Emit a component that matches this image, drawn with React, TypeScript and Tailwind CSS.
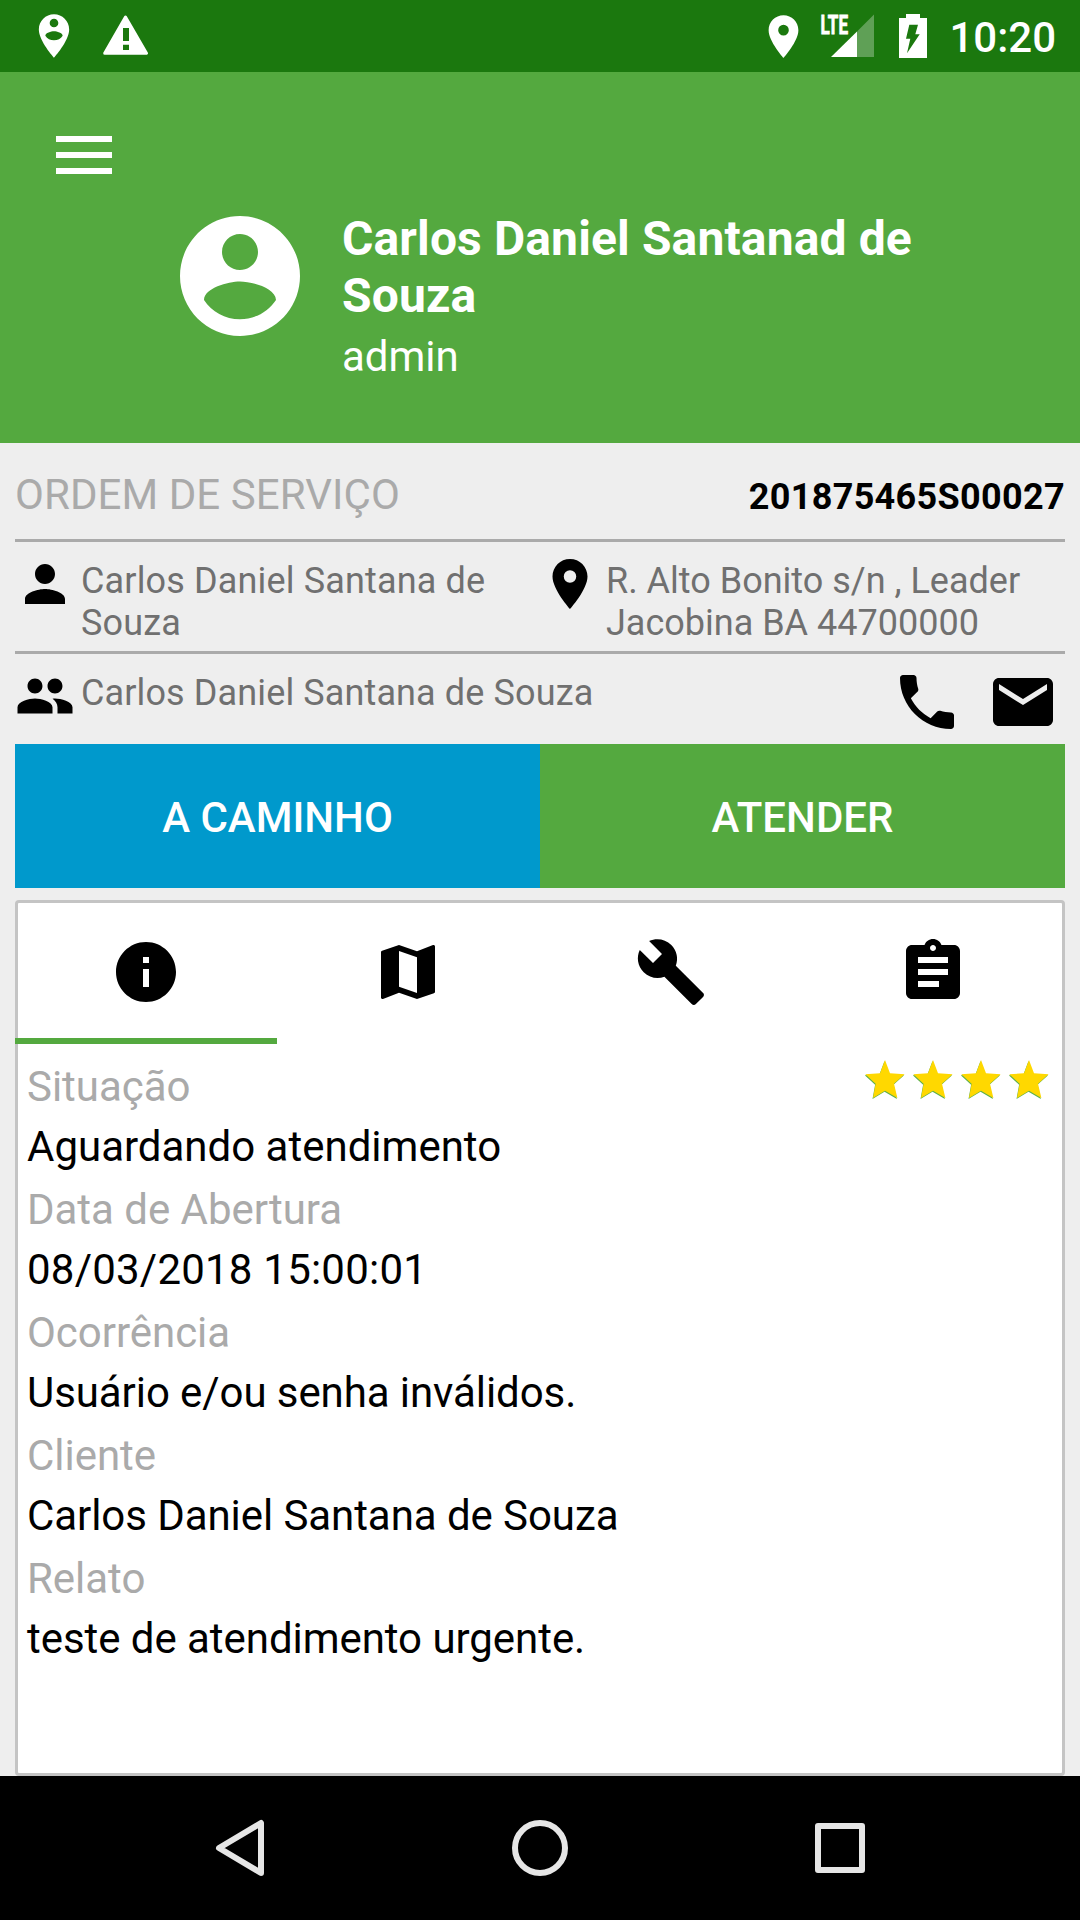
import type { ReactNode } from "react";
import { MdBuild, MdInfo, MdLocationOn, MdMail, MdPeople, MdPhone } from "react-icons/md";

interface IconProps {
  className: string;
}

interface Tab {
  id: string;
  icon: ReactNode;
}

interface Detail {
  label: string;
  value: string;
  tracking: string;
}

// Classic material glyphs on the 24 unit grid
const accountCirclePath =
  "M12 2C6.48 2 2 6.48 2 12s4.48 10 10 10 10-4.48 10-10S17.52 2 12 2zm0 3c1.66 0 3 1.34 3 3s-1.34 3-3 3-3-1.34-3-3 1.34-3 3-3zm0 14.2c-2.5 0-4.71-1.28-6-3.22.03-1.99 4-3.08 6-3.08 1.99 0 5.97 1.09 6 3.08-1.29 1.94-3.5 3.22-6 3.22z";
const personPinPath =
  "M12 2C8.14 2 5 5.14 5 9c0 5.25 7 13 7 13s7-7.75 7-13c0-3.86-3.14-7-7-7zm0 2c1.1 0 2 .9 2 2s-.9 2-2 2-2-.9-2-2 .9-2 2-2zm0 10c-1.67 0-3.14-.85-4-2.15.02-1.32 2.67-2.05 4-2.05s3.98.73 4 2.05c-.86 1.3-2.33 2.15-4 2.15z";
const personPath =
  "M12 12c2.21 0 4-1.79 4-4s-1.79-4-4-4-4 1.79-4 4 1.79 4 4 4zm0 2c-2.67 0-8 1.34-8 4v2h16v-2c0-2.66-5.33-4-8-4z";
const mapPath =
  "M20.5 3l-.16.03L15 5.1 9 3 3.36 4.9c-.21.07-.36.25-.36.48V20.500c0 .28.22.5.5.5l.16-.03L9 18.900l6 2.100 5.640-1.900c.21-.07.36-.25.36-.48V3.500c0-.28-.22-.5-.5-.5zM15 19l-6-2.110V5l6 2.110V19z";
const assignmentPath =
  "M19 3h-4.180C14.400 1.840 13.300 1 12 1c-1.300 0-2.400.840-2.820 2H5c-1.100 0-2 .9-2 2v14c0 1.100.9 2 2 2h14c1.100 0 2-.9 2-2V5c0-1.100-.9-2-2-2zm-7 0c.55 0 1 .45 1 1s-.45 1-1 1-1-.45-1-1 .45-1 1-1zm2 14H7v-2h7v2zm3-4H7v-2h10v2zm0-4H7V7h10v2z";

function Glyph({ path, className }: IconProps & { path: string }) {
  return (
    <svg className={className} viewBox="0 0 24 24" fill="currentColor">
      <path d={path} />
    </svg>
  );
}

const tabs: Tab[] = [
  { id: "info", icon: <MdInfo className="size-[72px]" /> },
  { id: "map", icon: <Glyph path={mapPath} className="size-[72px]" /> },
  { id: "tools", icon: <MdBuild className="size-[72px]" /> },
  { id: "report", icon: <Glyph path={assignmentPath} className="size-[72px]" /> },
];

const details: Detail[] = [
  {
    label: "Situação",
    value: "Aguardando atendimento",
    tracking: "tracking-normal",
  },
  {
    label: "Data de Abertura",
    value: "08/03/2018 15:00:01",
    tracking: "tracking-[0.22px]",
  },
  {
    label: "Ocorrência",
    value: "Usuário e/ou senha inválidos.",
    tracking: "tracking-[-0.08px]",
  },
  {
    label: "Cliente",
    value: "Carlos Daniel Santana de Souza",
    tracking: "tracking-[-0.07px]",
  },
  {
    label: "Relato",
    value: "teste de atendimento urgente.",
    tracking: "tracking-[-0.05px]",
  },
];

function WarningIcon({ className }: IconProps) {
  return (
    <svg className={className} viewBox="0 0 46 42">
      <path
        d="M22.500 2L43.500 38.200H1.700z"
        fill="white"
        stroke="white"
        strokeWidth="3"
        strokeLinejoin="round"
      />
      <path d="M20 13h6v13h-6zM20 29.700h6V35h-6z" fill="#1b780e" />
    </svg>
  );
}

function SignalIcon() {
  return (
    <svg className="h-[72px] w-[54px]" viewBox="0 0 54 72" fill="white">
      <path d="M54 14.500V57H37V31.500z" opacity="0.3" />
      <path d="M11 57L37 31.500V57z" />
      <text
        x="0.5"
        y="33.5"
        fontSize="26"
        fontWeight="700"
        textLength="27.5"
        lengthAdjust="spacingAndGlyphs"
        stroke="white"
        strokeWidth="0.8"
      >
        LTE
      </text>
    </svg>
  );
}

function BatteryIcon() {
  return (
    <svg className="h-[72px] w-[28px]" viewBox="0 0 28 72">
      <path
        fill="white"
        fillRule="evenodd"
        d="M7 14h14v4h7v40H0V18h7zM10.300 24.700H19L16.300 34.300H20.700L8 53.300L11.300 38.700H7z"
      />
    </svg>
  );
}

function StatusBar() {
  return (
    <div className="flex h-[72px] items-center bg-[#1b780e] text-white">
      <Glyph path={personPinPath} className="ml-[28px] size-[52px]" />
      <WarningIcon className="ml-[23px] h-[42px] w-[46px]" />
      <div className="ml-auto flex items-center pr-[24px]">
        <MdLocationOn className="mr-[11px] size-[51px]" />
        <SignalIcon />
        <div className="ml-[25px]">
          <BatteryIcon />
        </div>
        <span className="ml-[22px] pt-[2px] text-[42px] leading-[49px] font-medium">
          10:20
        </span>
      </div>
    </div>
  );
}

function Header() {
  return (
    <header className="h-[371px] bg-[#54a93f] pt-[64px] text-white">
      {/* Menu button */}
      <button className="ml-[56px] flex w-[56px] flex-col gap-[10px]">
        <span className="h-[6px] w-full bg-white" />
        <span className="h-[6px] w-full bg-white" />
        <span className="h-[6px] w-full bg-white" />
      </button>
      <div className="mt-[30px] flex pl-[168px]">
        <Glyph path={accountCirclePath} className="size-[144px] shrink-0" />
        <div className="ml-[30px] w-[600px] pt-[6px]">
          <h1 className="text-[48px] leading-[57px] font-bold tracking-[0.13px]">
            Carlos Daniel Santanad de Souza
          </h1>
          <p className="mt-[8px] text-[42px] leading-[49px]">admin</p>
        </div>
      </div>
    </header>
  );
}

function Star() {
  const points =
    "20,0 25,13.3 39.6,14.3 29,23.7 32.4,38 20,30.7 8,38 10.6,23.7 0.3,14.3 15,13.3";

  return (
    <svg className="h-[40px] w-[40px]" viewBox="0 0 40 40">
      <polygon points={points} fill="#5cb04a" transform="translate(-0.500 1)" />
      <polygon points={points} fill="#ffd800" />
    </svg>
  );
}

function OrderSummary() {
  return (
    <section className="text-[36px] leading-[42px] text-[#707070]">
      <div className="flex h-[99px] items-center justify-between border-b-[3px] border-[#aaaaaa]">
        <h2 className="pt-[6px] text-[42px] leading-[49px] tracking-[0.07px] text-[#aaaaaa]">
          ORDEM DE SERVIÇO
        </h2>
        <span className="pt-[11px] font-bold tracking-[0.33px] text-black">
          201875465S00027
        </span>
      </div>

      <div className="flex h-[112px] border-b-[3px] border-[#aaaaaa] pt-[12px]">
        <div className="flex w-1/2">
          <Glyph path={personPath} className="size-[60px] shrink-0 text-black" />
          <p className="ml-[6px] pt-[6px] tracking-[0.15px]">
            Carlos Daniel Santana de Souza
          </p>
        </div>
        <div className="flex w-1/2">
          <MdLocationOn className="size-[60px] shrink-0 text-black" />
          <p className="ml-[6px] pt-[6px]">
            R. Alto Bonito s/n , Leader Jacobina BA 44700000
          </p>
        </div>
      </div>

      <div className="flex h-[90px] pt-[12px]">
        <MdPeople className="size-[60px] shrink-0 text-black" />
        <p className="ml-[6px] flex-1 pt-[6px] tracking-[0.12px]">
          Carlos Daniel Santana de Souza
        </p>
        <div className="flex gap-[24px] pr-[6px] text-black">
          <MdPhone className="size-[72px]" />
          <MdMail className="size-[72px]" />
        </div>
      </div>
    </section>
  );
}

function DetailsCard() {
  return (
    <section className="mt-[12px] flex flex-1 flex-col rounded-[4px] border-[3px] border-[#c4c4c4] bg-white">
      {/* The active underline also covers the card border */}
      <nav className="-mx-[3px] grid h-[141px] grid-cols-[repeat(4,262.3px)]">
        {tabs.map((tab, index) => (
          <button
            key={tab.id}
            className={
              index === 0
                ? "flex justify-center border-b-[6px] border-[#54a93f] pt-[33px]"
                : "flex justify-center pt-[33px]"
            }
          >
            {tab.icon}
          </button>
        ))}
      </nav>

      <div className="flex justify-between pr-[13px] pl-[9px]">
        <dl className="pt-[18px] text-[42px] text-black">
          {details.map((detail) => (
            <div key={detail.label} className="h-[123px]">
              <dt className="h-[60px] leading-[49px] tracking-[-0.03px] text-[#aaaaaa]">
                {detail.label}
              </dt>
              <dd className={`leading-[49px] ${detail.tracking}`}>
                {detail.value}
              </dd>
            </div>
          ))}
        </dl>
        <div className="flex gap-[8px] pt-[16px]">
          <Star />
          <Star />
          <Star />
          <Star />
        </div>
      </div>
    </section>
  );
}

function NavigationBar() {
  return (
    <footer className="h-[144px] bg-black">
      <svg
        className="h-full w-full"
        viewBox="0 0 1080 144"
        fill="none"
        stroke="#e6e6e6"
        strokeWidth="6"
        strokeLinejoin="round"
      >
        <path d="M219 72L261 47V97z" />
        <circle cx="540" cy="72" r="25" />
        <rect x="818" y="50" width="44" height="44" />
      </svg>
    </footer>
  );
}

export default function App() {
  return (
    <div className="flex h-[1920px] w-[1080px] flex-col overflow-hidden bg-[#eeeeee] font-['Roboto',sans-serif]">
      <StatusBar />
      <Header />
      <main className="flex flex-1 flex-col px-[15px]">
        <OrderSummary />
        <div className="grid h-[144px] grid-cols-2 text-[42px] font-medium text-white">
          <button className="bg-[#0099cc] pt-[2px]">A CAMINHO</button>
          <button className="bg-[#54a93f] pt-[2px]">ATENDER</button>
        </div>
        <DetailsCard />
      </main>
      <NavigationBar />
    </div>
  );
}
